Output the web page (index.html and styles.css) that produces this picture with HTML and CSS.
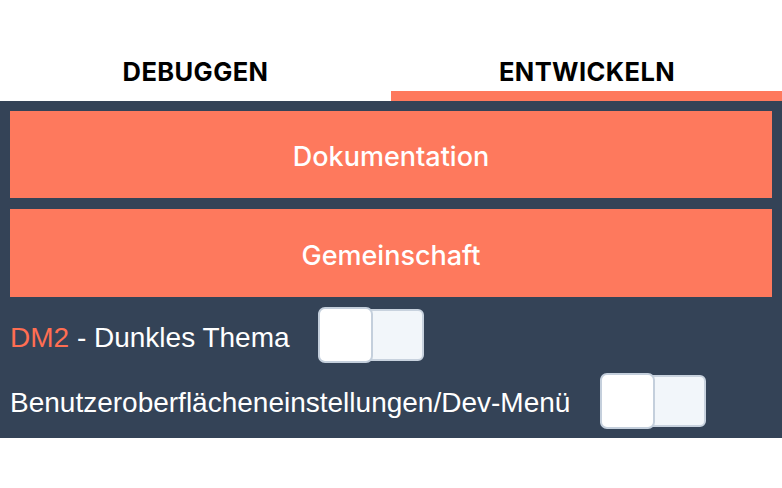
FILE: index.html
```html
<!DOCTYPE html>
<html lang="de">
<head>
<meta charset="utf-8">
<link rel="stylesheet" href="styles.css">
</head>
<body>
<div class="app">
  <div class="tabs">
    <div class="tab">DEBUGGEN</div>
    <div class="tab active">ENTWICKELN</div>
  </div>
  <div class="panel">
    <button class="btn">Dokumentation</button>
    <button class="btn">Gemeinschaft</button>
    <div class="row">
      <span class="label"><span class="accent">DM2</span> - Dunkles Thema</span>
      <span class="toggle"><span class="knob"></span></span>
    </div>
    <div class="row">
      <span class="label">Benutzeroberflächeneinstellungen/Dev-Menü</span>
      <span class="toggle"><span class="knob"></span></span>
    </div>
  </div>
</div>
</body>
</html>
```

FILE: styles.css
```css
html, body {
  margin: 0;
  padding: 0;
  background: #ffffff;
}
.app {
  padding-top: 48px;
}
.tabs {
  display: grid;
  grid-template-columns: 391px 391px;
}
.tab {
  height: 39px;
  border-bottom: 10px solid transparent;
  display: flex;
  align-items: center;
  justify-content: center;
  padding-top: 4px;
  box-sizing: content-box;
  font-family: Inter, "Liberation Sans", sans-serif;
  font-weight: 700;
  font-size: 25.5px;
  letter-spacing: 0.4px;
  color: #000000;
}
.tab.active {
  border-bottom-color: #fe795d;
  padding-left: 1px;
}
.panel {
  background: #344357;
  padding: 10px;
  display: flex;
  flex-direction: column;
  gap: 10px;
}
.btn {
  height: 87px;
  border: none;
  margin: 0;
  background: #fe795d;
  color: #ffffff;
  font-family: Inter, "Liberation Sans", sans-serif;
  font-size: 27px;
  font-weight: 500;
  padding: 4px 0 0;
}
.btn + .btn {
  height: 88px;
  margin-top: 1px;
}
.row {
  display: flex;
  align-items: center;
  gap: 28px;
  height: 56px;
}
.row + .row {
  height: 55px;
}
.row + .row .toggle {
  margin-left: 2px;
}
.label {
  font-family: "Liberation Sans", Arial, sans-serif;
  font-size: 28px;
  color: #ffffff;
  padding-top: 5px;
}
.accent {
  color: #ff6e52;
}
.toggle {
  position: relative;
  width: 106px;
  height: 52px;
  box-sizing: border-box;
  background: #f2f6fa;
  border: 2px solid #c8d2de;
  border-radius: 6px;
}
.knob {
  position: absolute;
  left: -2px;
  top: -4px;
  width: 55px;
  height: 56px;
  box-sizing: border-box;
  background: #ffffff;
  border: 2px solid #c4cfdc;
  border-radius: 7px;
}
```
